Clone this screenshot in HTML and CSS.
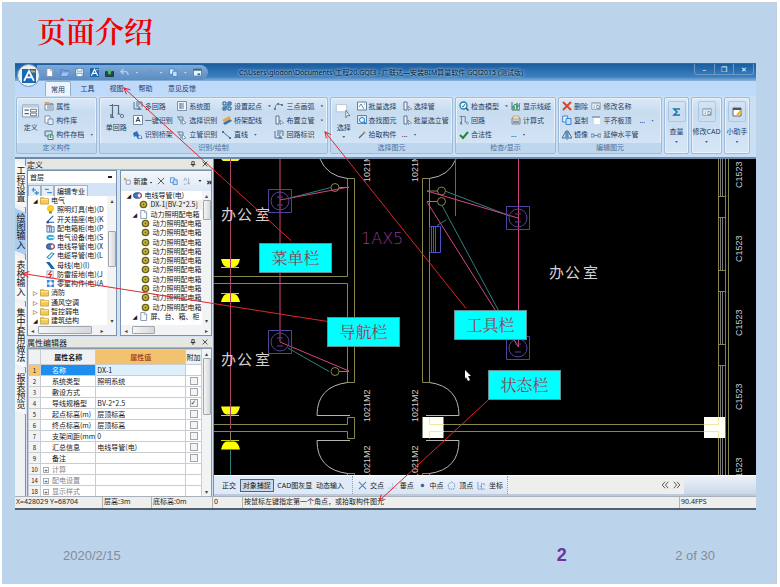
FILE: index.html
```html
<!DOCTYPE html>
<html lang="zh-CN">
<head>
<meta charset="utf-8">
<title>页面介绍</title>
<link rel="stylesheet" href="styles.css">
</head>
<body>
<svg class="sprite" aria-hidden="true">
  <symbol id="doc" viewBox="0 0 10 10"><path d="M2 .5h4.5l2 2v7H2z" fill="#fff" stroke="#7d92ac"/><path d="M6 1v2h2" fill="none" stroke="#7d92ac" stroke-width=".7"/></symbol>
  <symbol id="open" viewBox="0 0 10 10"><path d="M1 2h3l1 1h4v6H1z" fill="#6f9de0" stroke="#4b78be" stroke-width=".7"/><path d="M3 5h7L8 9H1z" fill="#9dc1f2"/></symbol>
  <symbol id="save" viewBox="0 0 10 10"><path d="M.5.5h9v9h-9z" fill="#d9ebf7" stroke="#4c86ad"/><path d="M2.500 .5h5v3h-5zM2 6h6v3.500H2z" fill="#fff" stroke="#4c86ad" stroke-width=".7"/></symbol>
  <symbol id="logo" viewBox="0 0 10 10"><path d="M0 0h10v10H0z" fill="#1769b3"/><path d="M1.500 8.500 5 1.500l3.500 7M3 6h4" fill="none" stroke="#fff" stroke-width="1.300"/><path d="M6 1h3.500v1.500H7z" fill="#f6a53c"/></symbol>
  <symbol id="pic" viewBox="0 0 10 10"><path d="M.5 4h9v5.500h-9z" fill="#244a43" stroke="#173340"/><path d="m5 1 3 3H6.500v3h-3V4H2z" fill="#54b86c"/></symbol>
  <symbol id="undo" viewBox="0 0 10 10"><path d="M1 4h5q3 0 3 4M4 1 1 4l3 3" fill="none" stroke="#a9cdf5" stroke-width="1.500"/></symbol>
  <symbol id="redo" viewBox="0 0 10 10"><path d="M9 4H4Q1 4 1 8M6 1l3 3-3 3" fill="none" stroke="#6f9ac8" stroke-width="1.300"/></symbol>
  <symbol id="copy" viewBox="0 0 10 10"><path d="M.7 1h5v6h-5z" fill="#e8f3ff" stroke="#3e83cc"/><path d="M4 3.500h5v6H4z" fill="#c5defa" stroke="#3e83cc"/></symbol>
  <symbol id="win" viewBox="0 0 10 10"><path d="M.5 1h9v8h-9z" fill="#e9f3fb" stroke="#557f9f"/><path d="M.5 1h9v2h-9z" fill="#356b96"/><path d="M5 6h3v2H5z" fill="#356b96"/></symbol>
  <symbol id="form" viewBox="0 0 20 16"><path d="M.5 1h19v14H.5z" fill="#f7f9fb" stroke="#7389a1"/><path d="M.5 1h19v3H.5z" fill="#c0ccd8"/><path d="M3 7h5M3 11h5" stroke="#50677e" stroke-width="1.500"/><path d="M10 6h7v3h-7zM10 10.500h7v3h-7z" fill="#fff" stroke="#50677e"/></symbol>
  <symbol id="prop" viewBox="0 0 10 10"><path d="M1 3h8v6H1z" fill="#fff" stroke="#7589a3"/><path d="M1 3h8M3 5h5M3 7h5" stroke="#60758c"/><path d="M0 1h5l2 2H2z" fill="#e7a34b"/></symbol>
  <symbol id="lib" viewBox="0 0 10 10"><path d="M1 1h5v7H1z" fill="#fff" stroke="#7d91a9"/><path d="M4 4h5v5.500H4z" fill="#e1edf9" stroke="#7d91a9"/></symbol>
  <symbol id="archive" viewBox="0 0 10 10"><path d="M1 1h7v5H1z" fill="#c9dcf0" stroke="#54728f"/><path d="M4 5h5v4.500H4z" fill="#fff" stroke="#54728f"/><path d="M6.500 4v4M5 6.500 6.500 8 8 6.500" fill="none" stroke="#40a060"/></symbol>
  <symbol id="loop" viewBox="0 0 16 16"><path d="M1 2.500h3M4 1v13M2.500 11v3.500h3M5 2.500h5v8.500M9 11h3" fill="none" stroke="#526980" stroke-width="1.200"/><circle cx="13.500" cy="13" r="1.500" fill="#fff" stroke="#526980"/></symbol>
  <symbol id="multi" viewBox="0 0 10 10"><path d="M1 1v7h4M3 1h6v5M3 3h4M3 5h3" fill="none" stroke="#577391"/><path d="m4 9 2-4 3 4z" fill="#5f88b3"/></symbol>
  <symbol id="abox" viewBox="0 0 10 10"><path d="M.5.500h9v9h-9z" fill="#fff" stroke="#7589a0"/><path d="m3 7 2-5 2 5M3.500 5.500h3" fill="none" stroke="#244b82"/></symbol>
  <symbol id="recog" viewBox="0 0 10 10"><path d="M0 3 4 1l2 4 3 1v3H5L3 6 1 7z" fill="#3171ba"/><circle cx="7" cy="7" r="1.500" fill="#d5e6f6"/></symbol>
  <symbol id="system" viewBox="0 0 10 10"><path d="M.5.500h9v9h-9z" fill="#eef5fc" stroke="#7890aa"/><path d="M3 2v6M3 3h4M3 5h4M3 7h4" stroke="#5f7893"/></symbol>
  <symbol id="pipe" viewBox="0 0 10 10"><path d="M0 2h6v3M2 2v3h2v4" fill="none" stroke="#68839f"/><path d="m5 4 4 4-2 .5-1 1z" fill="#fff" stroke="#56718d" stroke-width=".7"/></symbol>
  <symbol id="route" viewBox="0 0 10 10"><path d="M1 1h3v3H1zM6 1h3v3H6zM1 6h3v3H1zM6 6h3v3H6z" fill="none" stroke="#27588d"/><path d="m1 9 8-8" stroke="#377cba" stroke-width="1.500"/></symbol>
  <symbol id="tray" viewBox="0 0 10 10"><path d="m0 5 7-4 2 2-7 4z" fill="#efa441"/><path d="m1 8 7-4 2 2-7 4z" fill="#3f75ac"/></symbol>
  <symbol id="line" viewBox="0 0 10 10"><path d="m1 2 7 6" stroke="#386fae"/><path d="M0 1h2v2H0zM7 7h2v2H7z" fill="#506d8d"/></symbol>
  <symbol id="arc" viewBox="0 0 10 10"><path d="M1 8Q1 1 8 4" fill="none" stroke="#657e9b"/><path d="M0 7h2v2H0zM3 2h2v2H3zM7 3h2v2H7z" fill="#617d9a"/></symbol>
  <symbol id="place" viewBox="0 0 10 10"><path d="M2 1h3v8H2z" fill="#f4f8fc" stroke="#56718d"/><path d="m6 5 3.500 3-2 .3-1 1.200z" fill="#fff" stroke="#56718d" stroke-width=".7"/></symbol>
  <symbol id="select" viewBox="0 0 20 20"><path d="M1 2h13v9H1z" fill="#fff" stroke="#a9bdd3"/><path d="m13 9 5 7-3-.5-2 3z" fill="#fff" stroke="#4e6780"/></symbol>
  <symbol id="batch" viewBox="0 0 10 10"><path d="M.5 1h9v8h-9z" fill="#f7fbff" stroke="#657f9b"/><path d="m2 6 2-3 3 5M7 3h1" fill="none" stroke="#6b8aaa"/></symbol>
  <symbol id="find" viewBox="0 0 10 10"><path d="M.5.500h9v8h-9z" fill="#dcecff" stroke="#5b87b7"/><circle cx="5" cy="5" r="2.500" fill="#e9f9ff" stroke="#2779c4"/><path d="m7 7 2 2" stroke="#2779c4" stroke-width="1.500"/></symbol>
  <symbol id="pick" viewBox="0 0 10 10"><path d="m2 8 5-5" stroke="#536c85" stroke-width="1.300"/><path d="m7 1 2 2-1 1-2-2z" fill="#df8d3a"/></symbol>
  <symbol id="zoom" viewBox="0 0 10 10"><circle cx="4.500" cy="4.500" r="3.500" fill="#dff6ff" stroke="#267ba4" stroke-width="1.300"/><path d="m7 7 2.500 2.500" stroke="#235776" stroke-width="1.500"/><path d="m3 5 1 1 2-3" fill="none" stroke="#267ba4"/></symbol>
  <symbol id="check" viewBox="0 0 10 10"><path d="m1 5 3 3 5-6" fill="none" stroke="#278538" stroke-width="2"/></symbol>
  <symbol id="chart" viewBox="0 0 10 10"><path d="M1 1v8h8" fill="none" stroke="#4a6b7d"/><path d="M2 5h2v4H2zM5 2h2v7H5zM8 4h1v5H8z" fill="#56ad57"/><path d="m1 7 3-4 3 3 2-4" fill="none" stroke="#437ab3"/></symbol>
  <symbol id="calc" viewBox="0 0 10 10"><path d="M1 3h8v6H1z" fill="#c8d0db" stroke="#7c8999"/><path d="M2 1h6v3H2z" fill="#f0dcb5" stroke="#b49a6d" stroke-width=".6"/><path d="M2 7h6" stroke="#4f5f73"/></symbol>
  <symbol id="del" viewBox="0 0 10 10"><path d="m1 1 8 8M9 1 1 9" stroke="#db4428" stroke-width="2"/></symbol>
  <symbol id="rename" viewBox="0 0 12 10"><path d="M1 1h10v8H1z" fill="#f9fcff" stroke="#7890a8"/><path d="M1 1h10v2H1z" fill="#adc4da"/><path d="M3 5h2M3 7h2M7 4v4h3V5z" fill="none" stroke="#536f8c" stroke-width=".8"/></symbol>
  <symbol id="flat" viewBox="0 0 10 10"><path d="M1 1h8v2H1z" fill="#8fabc7"/><path d="M3 3h6v6H3z" fill="#fff"/></symbol>
  <symbol id="mirror" viewBox="0 0 10 10"><path d="M4 1v7H0zM6 1v7h4z" fill="#c7def4" stroke="#40749c"/><path d="M5 0v10" stroke="#40749c"/></symbol>
  <symbol id="extend" viewBox="0 0 10 10"><path d="M0 4h3v3H0zM7 4h3v3H7zM3 5.500h4" fill="none" stroke="#7086a0"/></symbol>
  <symbol id="sum" viewBox="0 0 10 10"><path d="M8 2H2l3 3-3 3h6" fill="none" stroke="#1877aa" stroke-width="1.600"/></symbol>
  <symbol id="helper" viewBox="0 0 10 10"><path d="M1 1h8v8H1z" fill="#fff" stroke="#606872"/><path d="M1 1h8v2H1z" fill="#445668"/><path d="m4 8 4-5 2 2-4 4z" fill="#efb632"/></symbol>
  <symbol id="folder" viewBox="0 0 10 10"><path d="M.5 2h4l1 1h4v6h-9z" fill="#f3ca55" stroke="#bd922d" stroke-width=".8"/><path d="M1 4h8" stroke="#fff0a5"/></symbol>
  <symbol id="bulb" viewBox="0 0 10 10"><circle cx="5" cy="4" r="3.500" fill="#ffd31c" stroke="#d99d0b" stroke-width=".5"/><path d="M3.500 7h3v2.500h-3z" fill="#8a7a48"/></symbol>
  <symbol id="switch" viewBox="0 0 10 10"><path d="m2 7 6-6M2 8h7" fill="none" stroke="#2855a0" stroke-width="1.200"/><circle cx="2" cy="8" r="1.500" fill="#2855a0"/></symbol>
  <symbol id="box" viewBox="0 0 10 10"><path d="M1 3h8v6H1z" fill="#dcecff" stroke="#397bc2"/><path d="M0 2h6" stroke="#df5548" stroke-width="1.500"/><path d="M4 3v6M6 3v6" stroke="#397bc2"/></symbol>
  <symbol id="device" viewBox="0 0 10 10"><ellipse cx="5" cy="5" rx="4.500" ry="3" fill="#35a6d8"/><path d="M3 5h6" stroke="#fff" stroke-width="1.500"/></symbol>
  <symbol id="wire" viewBox="0 0 10 10"><rect x=".5" y="2" width="9" height="6" rx="3" fill="#3b79bc" stroke="#234a8a"/><ellipse cx="7" cy="5" rx="2" ry="2.500" fill="#eff4fa" stroke="#cc4a50"/></symbol>
  <symbol id="cable" viewBox="0 0 10 10"><path d="m1 7 5-5 3 1-5 6z" fill="#9ed5f2" stroke="#2a77b9"/><path d="m3 7 4-4" stroke="#fff"/></symbol>
  <symbol id="bus" viewBox="0 0 10 10"><path d="M0 1h4l6 8H6z" fill="#1764ad"/></symbol>
  <symbol id="flash" viewBox="0 0 10 10"><path d="M1 1h7v8H1z" fill="#f3f4fb" stroke="#7b8fc2" stroke-width=".7"/><path d="M6 1 3 5h3L4 9" fill="none" stroke="#d42a2a" stroke-width="1.300"/></symbol>
  <symbol id="parts" viewBox="0 0 10 10"><path d="M1 1h3v3H1zM6 1h3v3H6zM1 6h3v3H1zM6 6h3v3H6z" fill="#3d87d5"/><path d="M4 2h2M4 8h2M2 4v2M8 4v2" stroke="#3d87d5"/></symbol>
  <symbol id="ring" viewBox="0 0 10 10"><circle cx="5" cy="5" r="3.500" fill="#cdbb44" stroke="#65601c" stroke-width="1.500"/><circle cx="5" cy="5" r="1" fill="#65601c"/></symbol>
  <symbol id="plus" viewBox="0 0 10 10"><path d="M3 1v5M1 3.500h5M7 5v5M4.500 7.500H10" stroke="#3f8fd2" stroke-width="1.600"/></symbol>
  <symbol id="minus" viewBox="0 0 10 10"><path d="M1 3h5M4 7h6" stroke="#3f8fd2" stroke-width="1.600"/></symbol>
  <symbol id="new" viewBox="0 0 10 10"><path d="M1 1h3v3H1z" fill="#e3ab35"/><path d="M4 4h5v5H4z" fill="#fff" stroke="#708aa3"/></symbol>
  <symbol id="cross" viewBox="0 0 10 10"><path d="m1 1 8 8M9 1 1 9" stroke="currentColor" stroke-width="1.200"/></symbol>
  <symbol id="sort" viewBox="0 0 10 10"><path d="m1 5 2-4 2 4M1 9h3M7 1v8M5.500 7 7 9l2-2" fill="none" stroke="#8ba3bd"/></symbol>
  <symbol id="pin" viewBox="0 0 10 10"><path d="M3 1h4v5H3zM1 6h8M5 6v4" fill="none" stroke="#222" stroke-width="1.300"/></symbol>
  <symbol id="perp" viewBox="0 0 10 10"><path d="M0 8h10M5 2v6" stroke="#b4cbe5"/></symbol>
  <symbol id="dot" viewBox="0 0 10 10"><circle cx="5" cy="5" r="2" fill="#3167aa"/></symbol>
  <symbol id="penta" viewBox="0 0 10 10"><path d="m5 1 4 3-1.500 5h-5L1 4z" fill="none" stroke="#6b8fba" stroke-dasharray="2 1"/></symbol>
  <symbol id="coord" viewBox="0 0 10 10"><path d="M1 1v8h8M3 6h2v2M6 3h2v2M5 2v7" fill="none" stroke="#7ca3d0"/></symbol>
  <symbol id="prev" viewBox="0 0 10 10"><path d="M5 1 1.500 5 5 9M9 1 5.500 5 9 9" fill="none" stroke="#333"/></symbol>
  <symbol id="next" viewBox="0 0 10 10"><path d="M1 1l3.500 4L1 9M5 1l3.500 4L5 9" fill="none" stroke="#333"/></symbol>
</svg>

<main class="slide">
  <h1>页面介绍</h1>
  <section class="app">
    <header class="titlebar">
      <div class="quick">
        <button aria-label="新建"><svg><use href="#doc"/></svg></button>
        <button aria-label="打开"><svg><use href="#open"/></svg></button>
        <button aria-label="保存"><svg><use href="#save"/></svg></button>
        <button aria-label="程序"><svg><use href="#logo"/></svg></button>
        <button aria-label="导入"><svg><use href="#pic"/></svg></button>
        <button aria-label="撤销"><svg><use href="#undo"/></svg></button><i class="caret"></i>
        <button aria-label="恢复"><svg><use href="#redo"/></svg></button><i class="caret"></i>
        <button aria-label="窗口"><svg><use href="#copy"/></svg></button><i class="caret"></i>
        <button aria-label="视口"><svg><use href="#win"/></svg></button>
      </div>
      <div class="caption">C:\Users\glodon\Documents\工程20.GQI3 - 广联达—安装BIM算量软件 GQI2015 (测试版)</div>
      <div class="winbtns"><button aria-label="最小化">–</button><button aria-label="还原">❐</button><button aria-label="关闭">✕</button></div>
    </header>
    <button class="orb" aria-label="应用菜单"><svg><use href="#logo"/></svg></button>

    <nav class="tabs">
      <button class="on">常用</button><button>工具</button><button>视图</button><button>帮助</button><button>意见反馈</button>
    </nav>

    <div class="ribbon">
      <section class="group">
        <div class="items g1">
          <button class="big"><svg><use href="#form"/></svg>定义</button>
          <div class="col">
            <button><svg><use href="#prop"/></svg>属性</button>
            <button><svg><use href="#lib"/></svg>构件库</button>
            <button><svg><use href="#archive"/></svg>构件存档<i class="caret"></i></button>
          </div>
        </div>
        <h2>定义构件</h2>
      </section>
      <section class="group">
        <div class="items g2">
          <button class="big"><svg><use href="#loop"/></svg>单回路</button>
          <div class="col">
            <button><svg><use href="#multi"/></svg>多回路</button>
            <button><svg><use href="#abox"/></svg>一键识别</button>
            <button><svg><use href="#recog"/></svg>识别桥架</button>
          </div>
          <div class="col">
            <button><svg><use href="#system"/></svg>系统图</button>
            <button><svg><use href="#pipe"/></svg>选择识别</button>
            <button><svg><use href="#pipe"/></svg>立管识别</button>
          </div>
          <div class="col">
            <button><svg><use href="#route"/></svg>设置起点<i class="caret"></i></button>
            <button><svg><use href="#tray"/></svg>桥架配线</button>
            <button><svg><use href="#line"/></svg>直线<i class="caret"></i></button>
          </div>
          <div class="col">
            <button><svg><use href="#arc"/></svg>三点画弧<i class="caret"></i></button>
            <button><svg><use href="#place"/></svg>布置立管<i class="caret"></i></button>
            <button><svg><use href="#multi"/></svg>回路标识</button>
          </div>
        </div>
        <h2>识别/绘制</h2>
      </section>
      <section class="group">
        <div class="items g3">
          <button class="big"><svg><use href="#select"/></svg>选择<i class="caret"></i></button>
          <div class="col">
            <button><svg><use href="#batch"/></svg>批量选择</button>
            <button><svg><use href="#find"/></svg>查找图元</button>
            <button><svg><use href="#pick"/></svg>拾取构件</button>
          </div>
          <div class="col">
            <button><svg><use href="#place"/></svg>选择管</button>
            <button><svg><use href="#place"/></svg>批量选立管</button>
            <button>...<i class="caret"></i></button>
          </div>
        </div>
        <h2>选择图元</h2>
      </section>
      <section class="group">
        <div class="items g4">
          <div class="col">
            <button><svg><use href="#zoom"/></svg>检查模型<i class="caret"></i></button>
            <button><svg><use href="#loop"/></svg>回路</button>
            <button><svg><use href="#check"/></svg>合法性</button>
          </div>
          <div class="col">
            <button><svg><use href="#chart"/></svg>显示线缆</button>
            <button><svg><use href="#calc"/></svg>计算式</button>
            <button>...<i class="caret"></i></button>
          </div>
        </div>
        <h2>检查/显示</h2>
      </section>
      <section class="group">
        <div class="items g5">
          <div class="col">
            <button><svg><use href="#del"/></svg>删除</button>
            <button><svg><use href="#copy"/></svg>复制</button>
            <button><svg><use href="#mirror"/></svg>镜像</button>
          </div>
          <div class="col">
            <button><svg><use href="#rename"/></svg>修改名称</button>
            <button><svg><use href="#flat"/></svg>平齐板顶</button>
            <button><svg><use href="#extend"/></svg>延伸水平管</button>
          </div>
          <div class="col"><button>...<i class="caret"></i></button></div>
        </div>
        <h2>编辑图元</h2>
      </section>
      <button class="group solo"><span><svg><use href="#sum"/></svg></span>查量<i class="caret"></i></button>
      <button class="group solo"><span><svg><use href="#rename"/></svg></span>修改CAD<i class="caret"></i></button>
      <button class="group solo"><span><svg><use href="#helper"/></svg></span>小助手<i class="caret"></i></button>
    </div>

    <div class="work">
      <nav class="side">
        <button>工程设置</button><button class="on">绘图输入</button><button>表格输入</button><button>集中套用做法</button><button>报表预览</button>
      </nav>
      <div class="docks">
        <div class="dockhead"><span>定义</span><svg><use href="#pin"/></svg><svg><use href="#cross"/></svg></div>
        <div class="pair">
          <section class="panel">
            <select aria-label="楼层"><option>首层</option></select>
            <div class="subtabs"><button aria-label="展开"><svg><use href="#plus"/></svg></button><button aria-label="折叠"><svg><use href="#minus"/></svg></button><button class="wide">编辑专业</button></div>
            <div class="scroller">
              <ul class="tree">
                <li class="l1"><b class="tw">◢</b><svg><use href="#folder"/></svg>电气</li>
                <li class="l2"><svg><use href="#bulb"/></svg>照明灯具(电)(D</li>
                <li class="l2"><svg><use href="#switch"/></svg>开关插座(电)(K</li>
                <li class="l2"><svg><use href="#box"/></svg>配电箱柜(电)(P</li>
                <li class="l2"><svg><use href="#device"/></svg>电气设备(电)(S</li>
                <li class="l2"><svg><use href="#wire"/></svg>电线导管(电)(X</li>
                <li class="l2"><svg><use href="#cable"/></svg>电缆导管(电)(L</li>
                <li class="l2"><svg><use href="#bus"/></svg>母线(电)(I)</li>
                <li class="l2"><svg><use href="#flash"/></svg>防雷接地(电)(J</li>
                <li class="l2"><svg><use href="#parts"/></svg>零星构件(电)(A</li>
                <li class="l1"><b class="tw">▷</b><svg><use href="#folder"/></svg>消防</li>
                <li class="l1"><b class="tw">▷</b><svg><use href="#folder"/></svg>通风空调</li>
                <li class="l1"><b class="tw">▷</b><svg><use href="#folder"/></svg>智控弱电</li>
                <li class="l1"><b class="tw">◢</b><svg><use href="#folder"/></svg>建筑结构</li>
              </ul>
              <div class="vbar mid"><i>▴</i><b></b><i>▾</i></div>
            </div>
            <div class="hbar"><i>◂</i><b></b><i>▸</i></div>
          </section>
          <section class="panel">
            <div class="tools"><svg><use href="#new"/></svg><button>新建<i class="caret"></i></button><svg><use href="#cross"/></svg><svg><use href="#copy"/></svg><svg><use href="#sort"/></svg><i class="caret"></i><b>»</b></div>
            <div class="scroller">
              <ul class="tree second">
                <li class="l1"><b class="tw">◢</b><svg><use href="#wire"/></svg>电线导管(电)</li>
                <li class="l2 sel"><svg><use href="#ring"/></svg>DX-1[BV-2*2.5]</li>
                <li class="l2"><b class="tw">◢</b><svg><use href="#doc"/></svg>动力照明配电箱</li>
                <li class="l3"><svg><use href="#ring"/></svg>动力照明配电箱</li>
                <li class="l3"><svg><use href="#ring"/></svg>动力照明配电箱</li>
                <li class="l3"><svg><use href="#ring"/></svg>动力照明配电箱</li>
                <li class="l3"><svg><use href="#ring"/></svg>动力照明配电箱</li>
                <li class="l3"><svg><use href="#ring"/></svg>动力照明配电箱</li>
                <li class="l3"><svg><use href="#ring"/></svg>动力照明配电箱</li>
                <li class="l3"><svg><use href="#ring"/></svg>动力照明配电箱</li>
                <li class="l3"><svg><use href="#ring"/></svg>动力照明配电箱</li>
                <li class="l3"><svg><use href="#ring"/></svg>动力照明配电箱</li>
                <li class="l3"><svg><use href="#ring"/></svg>动力照明配电箱</li>
                <li class="l2"><b class="tw">◢</b><svg><use href="#doc"/></svg>屏、台、箱、柜</li>
              </ul>
              <div class="vbar top"><i>▴</i><b></b><i>▾</i></div>
            </div>
            <div class="hbar short"><i>◂</i><b></b><i>▸</i></div>
          </section>
        </div>
        <div class="dockhead"><span>属性编辑器</span><svg><use href="#pin"/></svg><svg><use href="#cross"/></svg></div>
        <div class="props">
          <table>
            <colgroup><col class="c1"><col class="c2"><col class="c3"><col class="c4"></colgroup>
            <thead><tr><th></th><th>属性名称</th><th class="hot">属性值</th><th>附加</th></tr></thead>
            <tbody>
              <tr class="cur"><th>1</th><td>名称</td><td>DX-1</td><td></td></tr>
              <tr><th>2</th><td>系统类型</td><td>照明系统</td><td><input type="checkbox" aria-label="系统类型"></td></tr>
              <tr><th>3</th><td>敷设方式</td><td></td><td><input type="checkbox" aria-label="敷设方式"></td></tr>
              <tr><th>4</th><td>导线规格型</td><td>BV-2*2.5</td><td><input type="checkbox" checked aria-label="导线规格型"></td></tr>
              <tr><th>5</th><td>起点标高(m)</td><td>层顶标高</td><td><input type="checkbox" aria-label="起点标高"></td></tr>
              <tr><th>6</th><td>终点标高(m)</td><td>层顶标高</td><td><input type="checkbox" aria-label="终点标高"></td></tr>
              <tr><th>7</th><td>支架间距(mm</td><td>0</td><td><input type="checkbox" aria-label="支架间距"></td></tr>
              <tr><th>8</th><td>汇总信息</td><td>电线导管(电)</td><td><input type="checkbox" aria-label="汇总信息"></td></tr>
              <tr><th>9</th><td>备注</td><td></td><td><input type="checkbox" aria-label="备注"></td></tr>
              <tr class="sub"><th>10</th><td><b>+</b>计算</td><td></td><td></td></tr>
              <tr class="sub"><th>14</th><td><b>+</b>配电设置</td><td></td><td></td></tr>
              <tr class="sub"><th>18</th><td><b>+</b>显示样式</td><td></td><td></td></tr>
            </tbody>
          </table>
          <div class="vbar upper"><i>▴</i><b></b><i>▾</i></div>
        </div>
      </div>

      <div class="view">
        <svg class="cad" viewBox="214 160 542 317" preserveAspectRatio="xMinYMin slice" role="img" aria-label="平面图">
          <g class="yellow">
            <path d="M221 160h19l-2 2h-15zM221 260h19q-2 8-6 8h-7q-4 0-6-8zM221 303h19q-2-8-6-8h-7q-4 0-6 8zM221 407.500h19q-2 8-6 8h-7q-4 0-6-8zM221 450.500h19q-2-8-6-8h-7q-4 0-6 8z"/>
            <path class="yl" d="M221 268.500h18M221 294.500h18M221 416.500h18M221 441.500h18"/>
          </g>
          <g class="tan">
            <path d="M214 277.500h133.500V179.500M214 284.500h133.500v99h7v-204h-7M422.500 179.500v204h7v-204zM347.500 179.500h7M214 425.500h133.500v-7h7v21h-7v-7H214M444 425.500h260M444 432.500h260M718.500 160v317M728.500 160v317M718.500 197.500h7v21h-7M718.500 271.500h7v21h-7M718.500 345.500h7v21h-7M354.500 476.500v-2h-7v2M422.500 476.500v-2h7v2M230.500 432v10"/>
            <circle cx="335" cy="188.500" r="4"/><circle cx="335" cy="372.500" r="4"/><circle cx="441.500" cy="192" r="4"/><circle cx="441.500" cy="202.500" r="4"/>
            <path d="M339 188.500h10M339 372.500h10M427 192h10M427 202.500h10"/>
          </g>
          <g class="door">
            <path d="M320 160q7 17 27.500 19.500M456 160q-7 17-26.500 19.500M350 416.500h-33q0-29 30.500-33M426 416.500h33q0-29-29.500-33M350 441.500h-33q0 29 30.500 33M426 441.500h33q0 29-29.500 33"/>
          </g>
          <path class="glass" d="M720.500 160v37M722.500 160v37M725.500 160v317M720.500 219v52M722.500 219v52M720.500 293v52M722.500 293v52M720.500 367v52M722.500 367v52M720.500 439v38M722.500 439v38"/>
          <path class="column" d="M422.500 418h21v21h-21zM704 418h21v21h-21z"/>
          <path class="faint" d="M444 425.500h-14.500v-7M444 432.500h-14.500v7M704 425.500h14.500v-7M704 432.500h14.500v7"/>
          <g class="teal"><path d="M455.500 160v57M290 199l41-10.500M288 349l41 23.500M445 192l65 25M442 206.500 516 344M437 226.500l9-5.500M230.500 450v27"/></g>
          <path class="rose" d="M230.500 160v270"/>
          <path class="pink" d="M280 160v183l69 29M280 201l69-13M518.500 160v188L427 203M427 192l91 27"/>
          <g class="violet">
            <path d="M268.500 190.500h23v23h-23zM268.500 331.500h23v23h-23zM506.500 207.500h23v23h-23zM506.500 337.500h23v23h-23z"/>
            <circle cx="280" cy="202" r="9"/><circle cx="280" cy="343" r="9"/><circle cx="518" cy="219" r="9"/><circle cx="518" cy="349" r="9"/>
            <path d="M277 198h6M277 206h6M277 339h6M277 347h6M515 215h6M515 223h6M515 345h6M515 353h6"/>
          </g>
          <path class="panelbox" d="M429.500 227.500h11v26h-11zM431.500 228v25M433.500 228v25M435.500 228v25"/>
          <g class="room"><text x="221" y="221">办</text><text x="237" y="221">公</text><text x="255" y="221">室</text><text x="221" y="366">办</text><text x="237" y="366">公</text><text x="255" y="366">室</text><text x="549" y="279">办</text><text x="565" y="279">公</text><text x="583" y="279">室</text></g>
          <text class="ax" x="361" y="245">1AX5</text>
          <g class="dim">
            <text transform="translate(370 183) rotate(-90)">1021M2</text><text transform="translate(418 183) rotate(-90)">1021M2</text>
            <text transform="translate(370 423) rotate(-90)">1021M2</text><text transform="translate(418 423) rotate(-90)">1021M2</text>
            <text transform="translate(370 479) rotate(-90)">1021M2</text><text transform="translate(418 479) rotate(-90)">1021M2</text>
            <text transform="translate(742 189) rotate(-90)">C1523</text><text transform="translate(742 263) rotate(-90)">C1523</text><text transform="translate(742 337) rotate(-90)">C1523</text><text transform="translate(742 411) rotate(-90)">C1523</text><text transform="translate(742 485) rotate(-90)">C1523</text>
          </g>
          <path d="m465 371 6 6h-3l2 4-2 1-2-4-1 2z" fill="#fff"/>
        </svg>
        <div class="snap">
          <div class="modes"><button>正交</button><button class="on">对象捕捉</button><button>CAD图灰显</button><button>动态输入</button></div>
          <div class="points">
            <button><svg><use href="#cross"/></svg>交点</button><button><svg><use href="#perp"/></svg>垂点</button><button><svg><use href="#dot"/></svg>中点</button><button><svg><use href="#penta"/></svg>顶点</button><button><svg><use href="#coord"/></svg>坐标</button>
          </div>
          <div class="pager"><button aria-label="上一页"><svg><use href="#prev"/></svg></button><button aria-label="下一页"><svg><use href="#next"/></svg></button></div>
          <div class="tail"></div>
        </div>
      </div>
    </div>

    <footer class="status">
      <span>X=428029 Y=68704</span><span>层高:3m</span><span>底标高:0m</span><span>0</span><span>按鼠标左键指定第一个角点，或拾取构件图元</span><span>90.4FPS</span>
    </footer>

    <div class="notes">
      <svg viewBox="15 63 741 446" preserveAspectRatio="none" aria-hidden="true">
        <defs><marker id="tip" viewBox="0 0 8 8" refX="7" refY="4" markerWidth="8" markerHeight="8" orient="auto"><path d="M1 1l6 3-6 3" fill="none" stroke="#e0262c"/></marker></defs>
        <path d="M291 241 124 88"/><path d="M466 309 325 132"/><path d="M327 322 23 274"/><path d="M489 400 379 502"/>
      </svg>
      <div class="note n1">菜单栏</div><div class="note n2">导航栏</div><div class="note n3">工具栏</div><div class="note n4">状态栏</div>
    </div>
  </section>
  <footer class="foot"><span>2020/2/15</span><strong>2</strong><span>2 of 30</span></footer>
</main>
</body>
</html>
```
FILE: styles.css
```css
* { box-sizing: border-box; }
body { margin: 0; background: #fff; font-family: "Liberation Sans", "Noto Sans CJK SC", sans-serif; }
.sprite { position: absolute; width: 0; height: 0; }
.slide { margin: 2px 3px 4px 2px; padding: 0 20px 0 13px; background: #bbd4ec; border: 1px solid #c3cfdb; border-width: 1px 1px 1px 0; }
h1 { margin: 0; padding: 7px 0 0 22px; height: 60px; font: 600 29px/42px "KaiTi", "AR PL UKai CN", "Noto Serif CJK SC", "Noto Sans CJK SC", serif; color: #f00000; }
button { border: 0; padding: 0; margin: 0; background: none; font: inherit; color: inherit; white-space: nowrap; }
svg { display: block; flex: none; }

.app { position: relative; font: 7px/9px "Noto Sans", "Noto Sans CJK SC", sans-serif; color: #1f3b63; border-bottom: 2px solid #52606e; background: #c5dcf6; }
.caret { display: inline-block; flex: none; width: 3px; height: 2px; background: #4c6687; clip-path: polygon(0 0, 100% 0, 50% 100%); }

.titlebar { height: 18px; display: flex; align-items: center; background: linear-gradient(#1b5c9e, #2e73b5 45%, #3a7fbf 75%, #8fb4d8); border-top: 1px solid #41688f; }
.quick { margin-left: 22px; width: 171px; height: 15px; padding: 0 6px 0 8px; display: flex; align-items: center; justify-content: space-between; border-radius: 0 8px 8px 0; background: linear-gradient(#7ea9d7, #5b8cc3); }
.quick svg { width: 9px; height: 9px; }
.quick .caret { background: #dbe9f8; }
.caption { flex: 1; padding-left: 31px; color: #06172c; white-space: nowrap; text-shadow: 0 0 3px #b5d4f0, 0 0 3px #b5d4f0; }
.winbtns { display: flex; width: 60px; height: 11px; align-self: flex-start; margin-right: 2px; border: 1px solid #6f98c2; border-top: 0; border-radius: 0 0 3px 3px; color: #fff; }
.winbtns button { flex: 1; line-height: 9px; }
.winbtns button + button { border-left: 1px solid #6f98c2; }
.orb { position: absolute; left: 2px; top: 1px; width: 23px; height: 23px; border-radius: 50%; background: #e8eff6; border: 1px solid #7491b0; display: grid; place-items: center; }
.orb svg { width: 14px; height: 14px; }

.tabs { height: 15px; display: flex; padding-left: 30px; background: #bfd9fb; }
.tabs button { width: 29px; }
.tabs button:last-child { width: 44px; }
.tabs .on { background: #edf4fc; border: 1px solid #93b0d3; border-bottom: 0; border-radius: 2px 2px 0 0; width: 26px; margin-right: 2px; }

.ribbon { height: 63px; padding: 1px 6px 3px 1px; display: grid; grid-template-columns: minmax(0, 81fr) minmax(0, 229fr) minmax(0, 123fr) minmax(0, 101fr) minmax(0, 104fr) minmax(0, 25fr) minmax(0, 31fr) minmax(0, 26fr); gap: 2px; background: #cbdff4; border-bottom: 2px solid #6d8ba8; }
.group { display: flex; flex-direction: column; min-width: 0; border: 1px solid #9ebbd9; border-radius: 2px; box-shadow: inset 0 0 0 1px #e6f1fb; background: linear-gradient(#dce9f6, #c8dcf0 25%, #d5e6f6); }
.group h2 { margin: 0; height: 10px; font: inherit; text-align: center; color: #4c6e9a; background: #bed6ee; }
.items { flex: 1; display: grid; }
.g1 { grid-template-columns: minmax(0, 28fr) minmax(0, 53fr); }
.g2 { grid-template-columns: minmax(0, 33fr) minmax(0, 45fr) minmax(0, 45fr) minmax(0, 53fr) minmax(0, 53fr); }
.g3 { grid-template-columns: minmax(0, 26fr) minmax(0, 46fr) minmax(0, 51fr); }
.g4 { padding-left: 3px; grid-template-columns: minmax(0, 53fr) minmax(0, 45fr); }
.g5 { padding-left: 3px; grid-template-columns: minmax(0, 30fr) minmax(0, 49fr) minmax(0, 22fr); }
.big { display: flex; flex-direction: column; align-items: center; padding-top: 5px; gap: 4px; }
.big svg { width: 17px; height: 16px; }
.col { display: flex; flex-direction: column; justify-content: space-around; padding: 1px 0; }
.col button { height: 14px; display: flex; align-items: center; gap: 2px; }
.col svg { width: 10px; height: 10px; }
.col .caret { margin-left: 4px; }
.solo { align-items: center; gap: 5px; padding-top: 3px; }
.solo span { width: 18px; height: 21px; border: 1px solid #aec6df; border-radius: 2px; display: grid; place-items: center; }
.solo svg { width: 10px; height: 10px; }

.work { display: flex; height: 337px; background: #fff; color: #161616; }
.side { width: 11px; flex: none; display: flex; flex-direction: column; background: #eef1f3; font-size: 9px; border-right: 1px solid #7d8ea0; }
.side button { writing-mode: vertical-rl; width: 11px; height: 47px; line-height: 10px; background: #f7f7f5; border-bottom: 1px solid #8b949d; clip-path: polygon(0 0, 100% 5px, 100% 100%, 0 calc(100% - 4px)); }
.side button:first-child { margin-top: 2px; }
.side button:nth-child(4) { height: 66px; }
.side .on { background: #a9cdf2; }
.docks { width: 188px; flex: none; padding: 0 1px; display: flex; flex-direction: column; background: #d4e3f4; border-right: 1px solid #7790aa; }
.dockhead { height: 11px; flex: none; display: flex; align-items: center; gap: 6px; padding-right: 4px; background: #e6e6e2; border-bottom: 1px solid #aab3bc; font-size: 8px; }
.dockhead span { flex: 1; }
.dockhead svg { width: 6px; height: 6px; }
.pair { display: grid; grid-template-columns: 90fr 91fr; gap: 3px; height: 167px; flex: none; padding-bottom: 1px; }
.panel { min-width: 0; display: flex; flex-direction: column; border: 1px solid #7993af; background: #fff; }
.panel select { appearance: none; width: 100%; height: 12px; padding: 0 2px; border: 0; font: inherit; font-size: 7px; color: inherit; background: linear-gradient(#222, #222) calc(100% - 4px) 5px / 4px 2px no-repeat #fff; }
.subtabs { height: 13px; display: flex; align-items: flex-end; background: #d3e4f7; }
.subtabs button { width: 13px; height: 11px; background: #e6eef7; border: 1px solid #9db4cc; border-bottom: 0; }
.subtabs .wide { width: 34px; background: #f1f5fa; }
.subtabs svg { width: 8px; height: 8px; margin: auto; }
.scroller { flex: 1; min-height: 0; display: flex; }
.tree { flex: 1; min-width: 0; margin: 0; padding: 0; list-style: none; overflow: hidden; font-family: "Noto Sans CJK SC", sans-serif; display: flex; flex-direction: column; }
.tree li { flex: 1; min-height: 0; display: flex; align-items: center; gap: 2px; white-space: nowrap; line-height: 9px; }
.tree svg { width: 9px; height: 9px; }
.tree .tw { width: 5px; font: 6px/9px "DejaVu Sans", sans-serif; }
.tree .l1 { padding-left: 5px; }
.tree .l2 { padding-left: 18px; }
.second { padding-bottom: 4px; }
.second .l2 { padding-left: 11px; }
.second .l2.sel { padding-left: 18px; background: linear-gradient(#eeeeec, #eeeeec) 28px 0 no-repeat; }
.second .l3 { padding-left: 20px; }
.vbar { width: 9px; flex: none; display: flex; flex-direction: column; align-items: center; background: #f1f3f5; }
.vbar i, .hbar i { font: 6px/9px "DejaVu Sans", sans-serif; color: #444; }
.vbar b, .hbar b { background: linear-gradient(90deg, #f5f5f5, #d5d8dc); border: 1px solid #a0a6ad; border-radius: 1px; }
.vbar b { width: 8px; }
.vbar i:last-child { margin-top: auto; }
.mid b { height: 36px; margin-top: 26px; }
.top b { height: 20px; }
.upper b { height: 57px; }
.hbar { height: 10px; flex: none; display: flex; align-items: center; gap: 4px; padding: 0 13px 0 3px; background: #f1f3f5; }
.hbar b { width: 54px; height: 8px; }
.short b { width: 23px; }
.short { padding-right: 3px; }
.hbar i:last-child { margin-left: auto; }
.tools { height: 20px; display: flex; align-items: center; gap: 5px; padding: 0 2px; background: linear-gradient(#f4f7fb, #dde8f4); }
.tools svg { width: 8px; height: 8px; color: #555; }
.tools svg:first-child { margin-right: -3px; }
.tools b { font-size: 9px; }
.tools .caret { background: #222; margin-left: 2px; }

.props { flex: 1; min-height: 0; display: flex; overflow: hidden; background: #fff; border: 1px solid #8698aa; border-bottom: 0; }
table { flex: 1; height: 147px; table-layout: fixed; border-collapse: collapse; font-family: "Noto Sans CJK SC", sans-serif; }
.c1 { width: 12px; } .c2 { width: 52px; } .c4 { width: 16px; }
thead tr { height: 15px; }
tbody tr { height: 11px; }
th, td { padding: 0; border: 1px solid #c9cdd2; font-weight: 400; line-height: 9px; white-space: nowrap; overflow: hidden; }
thead th { background: #eff1f3; font-weight: 700; }
thead th:last-child { font-weight: 400; }
thead .hot { background: #f2c26f; color: #a54b1d; }
tbody th { background: #f2f3f4; font-size: 6px; }
td:nth-child(2) { padding-left: 11px; }
td:nth-child(3) { padding-left: 1px; }
td:nth-child(4) { text-align: center; }
.cur th { background: #f6c66f; }
.cur td { background: #def0fc; }
.cur td:nth-child(2) { background: #1d8ef0; color: #fff; }
.cur td:last-child { background: #fff; }
.sub td { color: #858585; }
.sub td:nth-child(2) { padding-left: 2px; }
.sub b { display: inline-block; width: 6px; height: 6px; margin-right: 3px; border: 1px solid #aaa; font: 6px/4px "Liberation Sans", sans-serif; text-align: center; color: #222; }
td input { appearance: none; display: block; width: 8px; height: 8px; margin: 0 auto; border: 1px solid #a0a6ac; background: #f3f4f5; }
td input:checked::after { content: "✓"; display: block; font: 7px/6px "DejaVu Sans", sans-serif; color: #24385c; text-align: center; }

.view { flex: 1; min-width: 0; display: flex; flex-direction: column; }
.cad { width: 100%; flex: 1; min-height: 0; background: #000; }
.cad path, .cad circle { stroke-width: 1; }
.yellow path { fill: #ffff00; }
.yellow .yl { stroke: #d4d400; }
.tan { fill: none; stroke: #87874c; }
.door { fill: none; stroke: #b4b4b4; }
.glass { fill: none; stroke: #7b7b7b; }
.column { fill: #fffff6; }
.faint { fill: none; stroke: #efe8ae; }
.teal { fill: none; stroke: #2f7f80; }
.rose { stroke: #a84369; }
.pink { fill: none; stroke: #d64484; }
.violet { fill: none; stroke: #51449b; }
.panelbox { fill: none; stroke: #4f51c4; }
.room { font: 15px "Noto Sans CJK SC", sans-serif; fill: #d2d2d2; }
.ax { font: 16px "DejaVu Sans", sans-serif; font-weight: 200; fill: #8d3599; }
.dim { font: 9px "Liberation Sans", sans-serif; fill: #d0d0d0; }
.snap { height: 21px; flex: none; display: flex; align-items: stretch; border-top: 1px solid #fff; border-bottom: 2px solid #bccadb; background: #eeeeec; }
.snap button { display: flex; align-items: center; }
.modes { width: 139px; flex: none; display: flex; align-items: center; justify-content: space-between; padding: 0 8px 0 8px; background: #dfe9f7; border-right: 1px dotted #8fa2b9; }
.modes .on { height: 13px; padding: 0 2px; border: 1px solid #52647c; background: #cbd9ea; }
.points { width: 155px; flex: none; display: flex; align-items: center; justify-content: space-between; padding: 0 4px 0 5px; background: linear-gradient(#edf3fb, #dae5f3); border-right: 1px dotted #8fa2b9; }
.points button { gap: 3px; }
.points svg { width: 9px; height: 9px; color: #4e83c0; }
.pager { flex: 1; display: flex; align-items: center; justify-content: flex-end; gap: 4px; padding-right: 3px; }
.pager svg { width: 8px; height: 8px; }
.tail { width: 72px; background: linear-gradient(#eef2f8, #cbd7e9); }

.status { height: 12px; display: grid; grid-template-columns: 88fr 49fr 61fr 30fr 437fr 76fr; align-items: stretch; background: #eeeeec; border-top: 1px solid #a7b0bb; color: #1e1e1e; }
.status span { padding-left: 1px; line-height: 10px; white-space: nowrap; border-right: 1px solid #b3b3b0; }
.status span:last-child { border: 0; }

.notes { position: absolute; inset: 0; pointer-events: none; }
.notes svg { width: 100%; height: 100%; fill: none; stroke: #e0262c; stroke-width: 1; }
.notes svg > path { marker-end: url(#tip); }
.note { position: absolute; width: 73px; height: 30px; border: 1px solid #648f92; background: #00ffff; color: #963b4a; font: 400 16px/27px "SimSun", "Noto Serif CJK SC", "Noto Sans CJK SC", serif; text-align: center; }
.n1 { left: 244px; top: 180px; }
.n2 { left: 312px; top: 254px; }
.n3 { left: 439px; top: 247px; }
.n4 { left: 473px; top: 307px; }

.foot { display: grid; grid-template-columns: 10fr auto 3fr; align-items: center; height: 73px; padding: 18px 41px 0 48px; font-size: 13px; color: #858d96; }
.foot strong { font-size: 18px; color: #7030a0; }
.foot span:last-child { text-align: right; }
```
